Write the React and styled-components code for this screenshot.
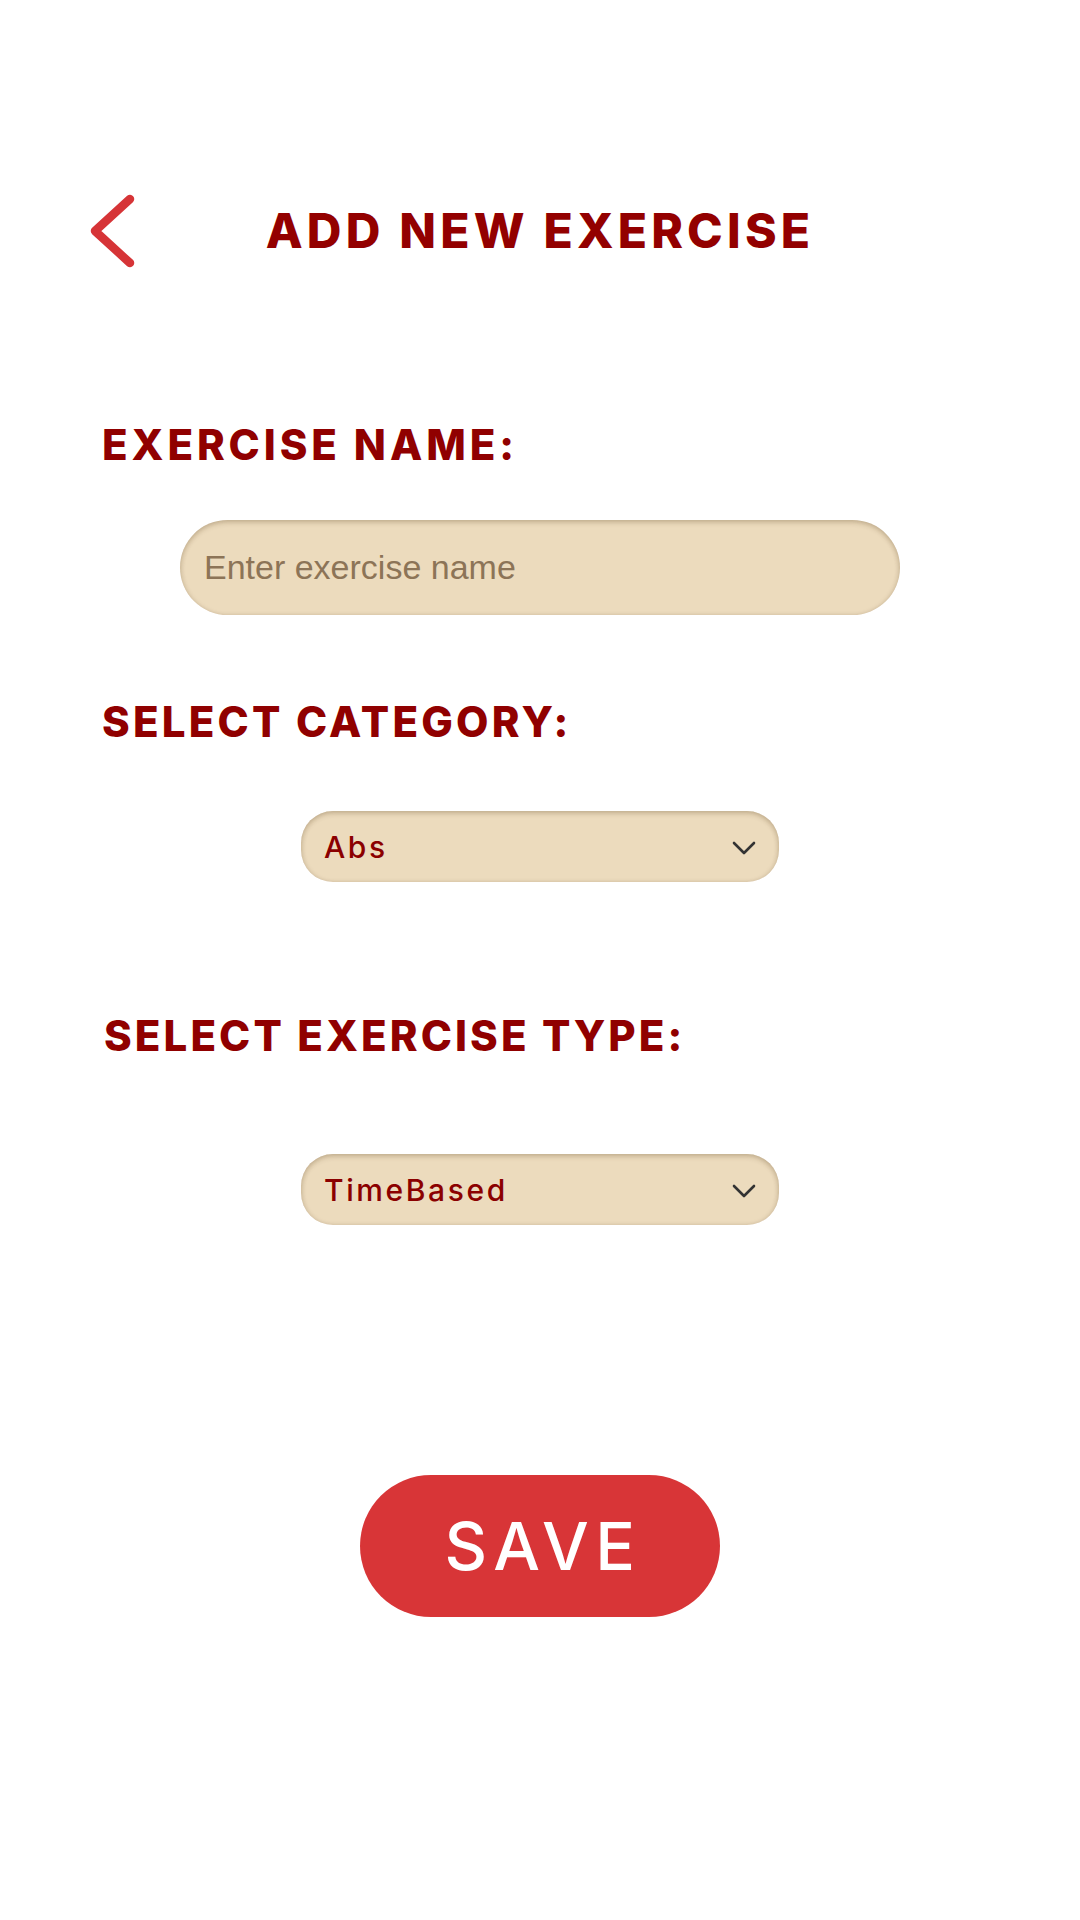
import React from "react";
import styled, { createGlobalStyle } from "styled-components";

const GlobalStyle = createGlobalStyle`
  html, body {
    margin: 0;
    padding: 0;
    background: #ffffff;
  }
  body {
    font-family: Inter, "Noto Sans", sans-serif;
  }
  * { box-sizing: border-box; }
`;

const Page = styled.div`
  width: 1080px;
  min-height: 1920px;
  background: #ffffff;
  padding-top: 193px;
  display: flex;
  flex-direction: column;
`;

const Header = styled.header`
  display: grid;
  grid-template-columns: 1fr auto 1fr;
  align-items: center;
  height: 76px;
`;

const BackButton = styled.button`
  justify-self: start;
  margin-left: 90px;
  width: 46px;
  height: 76px;
  padding: 0;
  border: none;
  background: transparent;
  display: flex;
  align-items: center;
  justify-content: center;
  cursor: pointer;
`;

const Title = styled.h1`
  margin: 0;
  font-family: Inter, "Noto Sans", sans-serif;
  font-weight: 800;
  font-size: 48px;
  line-height: 1;
  letter-spacing: 4.2px;
  color: #930000;
  white-space: nowrap;
`;

const Form = styled.form`
  display: flex;
  flex-direction: column;
  margin: 0;
`;

const Label = styled.label`
  display: block;
  margin: ${(p) => p.$top}px 0 0 ${(p) => 102 + (p.$indent || 0)}px;
  font-family: Inter, "Noto Sans", sans-serif;
  font-weight: 800;
  font-size: 42px;
  line-height: 1;
  letter-spacing: ${(p) => p.$spacing || 3.2}px;
  color: #900000;
  white-space: nowrap;
`;

const TextInput = styled.input`
  display: block;
  align-self: center;
  margin-top: ${(p) => p.$top}px;
  width: 720px;
  height: 95px;
  padding: 0 24px;
  border: none;
  border-radius: 48px;
  background: #ecdbbd;
  box-shadow: inset 0 3px 5px rgba(80, 50, 10, 0.18),
    inset 2px 0 4px rgba(80, 50, 10, 0.08),
    inset -2px 0 4px rgba(80, 50, 10, 0.08);
  font-family: "Liberation Sans", Arial, sans-serif;
  font-size: 34px;
  color: #5a3b1c;
  outline: none;

  &::placeholder {
    color: #8c7457;
    opacity: 1;
  }
`;

const SelectWrap = styled.div`
  position: relative;
  align-self: center;
  margin-top: ${(p) => p.$top}px;
  width: 478px;
  height: 71px;
`;

const Select = styled.select`
  appearance: none;
  -webkit-appearance: none;
  width: 100%;
  height: 100%;
  padding: 0 60px 0 23px;
  border: none;
  border-radius: 32px;
  background: #ecdbbd;
  box-shadow: inset 0 3px 5px rgba(80, 50, 10, 0.18),
    inset 2px 0 4px rgba(80, 50, 10, 0.08),
    inset -2px 0 4px rgba(80, 50, 10, 0.08);
  font-family: Inter, "Noto Sans", sans-serif;
  font-weight: 500;
  font-size: 30px;
  letter-spacing: 2.6px;
  color: #8b0000;
  outline: none;
`;

const Caret = styled.svg`
  position: absolute;
  right: 22px;
  top: 29px;
  width: 26px;
  height: 16px;
  pointer-events: none;
`;

const SaveButton = styled.button`
  align-self: center;
  margin-top: 250px;
  width: 360px;
  height: 142px;
  border: none;
  border-radius: 71px;
  background: #d83537;
  color: #ffffff;
  font-family: Inter, "Noto Sans", sans-serif;
  font-weight: 500;
  font-size: 66px;
  letter-spacing: 6.5px;
  line-height: 1;
  padding: 0 0 0 6px;
  cursor: pointer;
`;

function Chevron() {
  return (
    <svg width="46" height="76" viewBox="0 0 46 76" aria-hidden="true">
      <polyline
        points="40,6 5,38 40,70"
        fill="none"
        stroke="#d63437"
        strokeWidth="8.5"
        strokeLinecap="round"
        strokeLinejoin="round"
      />
    </svg>
  );
}

function DropdownCaret() {
  return (
    <Caret viewBox="0 0 26 16" aria-hidden="true">
      <polyline
        points="3,3 13,13 23,3"
        fill="none"
        stroke="#333333"
        strokeWidth="2.6"
        strokeLinecap="round"
        strokeLinejoin="round"
      />
    </Caret>
  );
}

function Dropdown({ top, value, options }) {
  return (
    <SelectWrap $top={top}>
      <Select defaultValue={value}>
        {options.map((o) => (
          <option key={o} value={o}>
            {o}
          </option>
        ))}
      </Select>
      <DropdownCaret />
    </SelectWrap>
  );
}

export default function App() {
  return (
    <>
      <GlobalStyle />
      <Page>
        <Header>
          <BackButton type="button" aria-label="Back">
            <Chevron />
          </BackButton>
          <Title>ADD NEW EXERCISE</Title>
          <div />
        </Header>
        <Form onSubmit={(e) => e.preventDefault()}>
          <Label $top={155} $spacing={3.9}>EXERCISE NAME:</Label>
          <TextInput $top={54} placeholder="Enter exercise name" />
          <Label $top={86}>SELECT CATEGORY:</Label>
          <Dropdown
            top={68}
            value="Abs"
            options={["Abs", "Arms", "Back", "Chest", "Legs", "Shoulders"]}
          />
          <Label $top={133} $indent={2} $spacing={3.1}>
            SELECT EXERCISE TYPE:
          </Label>
          <Dropdown top={97} value="TimeBased" options={["TimeBased", "RepBased"]} />
          <SaveButton type="submit">SAVE</SaveButton>
        </Form>
      </Page>
    </>
  );
}
